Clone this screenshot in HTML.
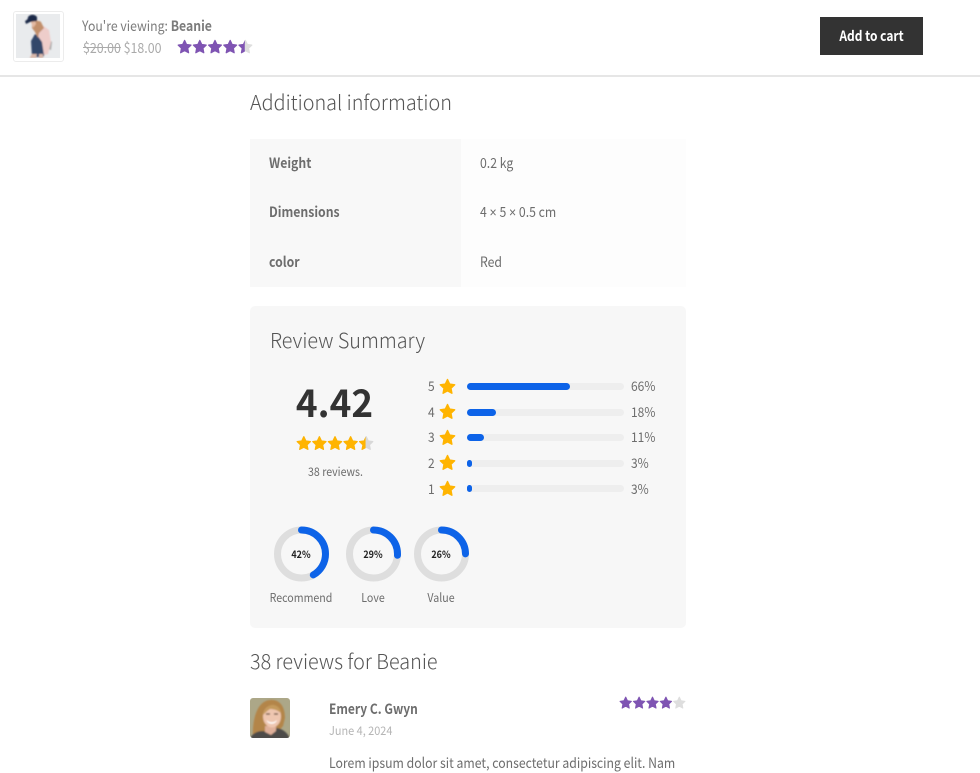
<!DOCTYPE html>
<html lang="en"><head><meta charset="utf-8"><title>Beanie</title>
<style>
html,body{margin:0;padding:0;background:#fff}
body{position:relative;width:980px;height:773px;overflow:hidden;font-family:"Noto Sans CJK JP","Liberation Sans",sans-serif;color:#6d6d6d;font-size:14px}
.t{position:absolute;white-space:nowrap;line-height:20px;transform:scaleX(.875);transform-origin:0 50%}
.c{transform-origin:50% 50%;text-align:center}
.b{font-weight:700}
.box{position:absolute}
.h{font-weight:300;color:#555;font-size:20.500px;line-height:30px;transform:scaleX(.965)}
.r{font-size:13.500px;transform:scaleX(.89)}
.track{position:absolute;left:467px;width:157px;height:7px;border-radius:4px;background:#eee}
.fill{position:absolute;left:0;top:0;height:7px;border-radius:4px;background:#0d63e8}
svg{position:absolute;display:block}
</style></head><body>
<svg width="0" height="0" style="left:0;top:0"><defs>
<path id="s" d="M12 2l3.100 6.500 7.100 1-5.200 5 1.300 7.100L12 18.200l-6.300 3.400 1.300-7.100-5.200-5 7.100-1z" stroke-width="1.800" stroke-linejoin="round"/>
<g id="row"><use href="#s" x="0"/><use href="#s" x="24"/><use href="#s" x="48"/><use href="#s" x="72"/><use href="#s" x="96"/></g>
<clipPath id="c442"><rect x="-2" y="0" width="109" height="25"/></clipPath>
<filter id="bl" x="-10%" y="-10%" width="120%" height="120%"><feGaussianBlur stdDeviation=".7"/></filter>
<clipPath id="bx"><rect width="40" height="40"/></clipPath>
</defs></svg>

<!-- sticky bar -->
<div class="box" style="left:0;top:75px;width:980px;height:2px;background:#e6e6e6"></div>
<div class="box" style="left:13px;top:11px;width:49px;height:49px;border:1px solid #ececec;border-radius:3px;background:#fff"></div>
<svg style="left:16px;top:14px" width="44" height="44" viewBox="0 0 44 44">
<rect width="44" height="44" fill="#e9ebed"/>
<g filter="url(#bl)">
<path d="M29 23l7 5-1 8-6-2z" fill="#a9a9a9"/>
<path d="M15 27l4-7 9 6 1 14-2 3H16z" fill="#33476a"/>
<path d="M19 14l7-3 7 5 2 12-3 12-4 1-2-13-7-10z" fill="#eecdca"/>
<path d="M16 9c3-2 7-3 9-1l3 6-5 5-1 5-3-6-3-4z" fill="#c2906c"/>
<path d="M15 8l4-2 1 4-3 4z" fill="#e3b9a2"/>
<path d="M9 7c2-1 3-2 3-4 2-3 7-3 9 0v4l-7 1-4 2z" fill="#1f2b48"/>
<path d="M14 43l2-3h5l-1 4h-6zM23 40h4v4h-4z" fill="#d9b8aa"/>
</g>
</svg>
<div class="t" style="left:82px;top:16px;color:#7c7c7c">You're viewing: <span class="b">Beanie</span></div>
<div class="t" style="left:83px;top:38px;color:#aaa;transform:scaleX(.886)"><span style="text-decoration:line-through">$20.00</span> $18.00</div>
<svg style="left:177px;top:39px" width="76" height="16" viewBox="0 0 120 25"><g stroke="#dedede" fill="#dedede"><use href="#row"/></g><g clip-path="url(#c442)" stroke="#7f54b3" fill="#7f54b3"><use href="#row"/></g></svg>
<div class="box" style="left:820px;top:17px;width:103px;height:38px;background:#333"></div>
<div class="t b c" style="left:820px;top:26px;width:103px;color:#fff;transform:scaleX(.855)">Add to cart</div>

<div class="t h" style="left:250px;top:85.500px">Additional information</div>

<!-- table -->
<div class="box" style="left:250px;top:139px;width:211px;height:148px;background:#f8f8f8"></div>
<div class="box" style="left:461px;top:139px;width:225px;height:148px;background:#fdfdfd"></div>
<div class="t b" style="left:269px;top:153px">Weight</div>
<div class="t" style="left:480px;top:153px">0.2 kg</div>
<div class="t b" style="left:269px;top:202px">Dimensions</div>
<div class="t" style="left:480px;top:202px">4 <span style="font-family:'Liberation Sans',sans-serif">×</span> 5 <span style="font-family:'Liberation Sans',sans-serif">×</span> 0.5 cm</div>
<div class="t b" style="left:269px;top:251.500px">color</div>
<div class="t" style="left:480px;top:251.500px">Red</div>

<!-- summary -->
<div class="box" style="left:250px;top:306px;width:436px;height:322px;background:#f7f7f7;border-radius:5px"></div>
<div class="t h" style="left:270px;top:324px">Review Summary</div>
<div class="t b c" style="left:250px;top:378px;width:169px;font-size:38px;line-height:46px;color:#333;transform:scaleX(.97)">4.42</div>
<svg style="left:296px;top:435px" width="78" height="17" viewBox="0 0 120 25"><g stroke="#d8d8d8" fill="#d8d8d8"><use href="#row"/></g><g clip-path="url(#c442)" stroke="#ffb400" fill="#ffb400"><use href="#row"/></g></svg>
<div class="t c" style="left:250.500px;top:462px;width:169px;font-size:12px;transform:scaleX(.885)">38 reviews.</div>

<div class="t r" style="left:428px;top:375px">5</div>
<svg style="left:439px;top:378px" width="17" height="17" viewBox="0 0 24 24" stroke="#ffb400" fill="#ffb400"><use href="#s"/></svg>
<div class="track" style="top:383px"><div class="fill" style="width:103px"></div></div>
<div class="t r" style="left:631px;top:375px">66%</div>

<div class="t r" style="left:428px;top:401px">4</div>
<svg style="left:439px;top:403px" width="17" height="17" viewBox="0 0 24 24" stroke="#ffb400" fill="#ffb400"><use href="#s"/></svg>
<div class="track" style="top:409px"><div class="fill" style="width:29px"></div></div>
<div class="t r" style="left:631px;top:401px">18%</div>

<div class="t r" style="left:428px;top:426px">3</div>
<svg style="left:439px;top:429px" width="17" height="17" viewBox="0 0 24 24" stroke="#ffb400" fill="#ffb400"><use href="#s"/></svg>
<div class="track" style="top:434px"><div class="fill" style="width:17px"></div></div>
<div class="t r" style="left:631px;top:426px">11%</div>

<div class="t r" style="left:428px;top:452px">2</div>
<svg style="left:439px;top:454px" width="17" height="17" viewBox="0 0 24 24" stroke="#ffb400" fill="#ffb400"><use href="#s"/></svg>
<div class="track" style="top:460px"><div class="fill" style="width:5px"></div></div>
<div class="t r" style="left:631px;top:452px">3%</div>

<div class="t r" style="left:428px;top:478px">1</div>
<svg style="left:439px;top:480px" width="17" height="17" viewBox="0 0 24 24" stroke="#ffb400" fill="#ffb400"><use href="#s"/></svg>
<div class="track" style="top:485px"><div class="fill" style="width:5px"></div></div>
<div class="t r" style="left:631px;top:478px">3%</div>

<!-- rings -->
<svg style="left:270px;top:523px" width="204" height="62" viewBox="0 0 204 62" fill="none" stroke-width="7">
<circle cx="31.500" cy="31" r="24" stroke="#dedede"/>
<circle cx="103.500" cy="31" r="24" stroke="#dedede"/>
<circle cx="171.500" cy="31" r="24" stroke="#dedede"/>
<circle cx="31.500" cy="31" r="24" stroke="#0d63e8" stroke-linecap="round" pathLength="100" stroke-dasharray="42 100" transform="rotate(-90 31.500 31)"/>
<circle cx="103.500" cy="31" r="24" stroke="#0d63e8" stroke-linecap="round" pathLength="100" stroke-dasharray="26 100" transform="rotate(-90 103.500 31)"/>
<circle cx="171.500" cy="31" r="24" stroke="#0d63e8" stroke-linecap="round" pathLength="100" stroke-dasharray="25 100" transform="rotate(-90 171.500 31)"/>
</svg>
<div class="t b c" style="left:271px;top:544px;width:60px;font-size:10px;color:#222;transform:scaleX(.9)">42%</div>
<div class="t b c" style="left:343px;top:544px;width:60px;font-size:10px;color:#222;transform:scaleX(.9)">29%</div>
<div class="t b c" style="left:411px;top:544px;width:60px;font-size:10px;color:#222;transform:scaleX(.9)">26%</div>
<div class="t c" style="left:261px;top:587.500px;width:80px;font-size:12px;transform:scaleX(.885)">Recommend</div>
<div class="t c" style="left:333px;top:587.500px;width:80px;font-size:12px;transform:scaleX(.885)">Love</div>
<div class="t c" style="left:401px;top:587.500px;width:80px;font-size:12px;transform:scaleX(.885)">Value</div>

<!-- reviews -->
<div class="t h" style="left:250px;top:644.500px">38 reviews for Beanie</div>
<svg style="left:250px;top:698px;border-radius:3px" width="40" height="40" viewBox="0 0 40 40">
<g clip-path="url(#bx)"><rect width="40" height="40" fill="#aca788"/>
<g filter="url(#bl)">
<path d="M3 40C2 24 6 3 20 2c10-1 15 7 15 18l-2 8-5 6H12z" fill="#b3854a"/>
<path d="M0 41c2-6 8-8 13-8l8 2 6-5c6 1 11 5 13 11z" fill="#4e4c49"/>
<path d="M15 28h11v5l-5 4-6-3z" fill="#dfb09a"/>
<ellipse cx="22" cy="18.500" rx="9" ry="11" fill="#eec6b0"/>
<path d="M13 17c1-6 6-11 11-10 4 1 7 4 7 8-4-3-7-4-11-4-2 1-5 4-7 6z" fill="#c49a5c"/>
<path d="M16.500 22c3 3 7.500 3 10.500 0-1 5-9.500 5-10.500 0z" fill="#fff"/>
<path d="M16 16h4M24 16h4" stroke="#5a4230" stroke-width="1.200"/>
</g></g>
</svg>
<div class="t b" style="left:329px;top:698.500px;transform:scaleX(.856)">Emery C. Gwyn</div>
<div class="t" style="left:329px;top:720.500px;font-size:12px;color:#b5b5b5;transform:scaleX(.91)">June 4, 2024</div>
<svg style="left:619px;top:696px" width="67" height="14" viewBox="0 0 120 25"><g stroke="#dedede" fill="#dedede"><use href="#row"/></g><g stroke="#7f54b3" fill="#7f54b3"><use href="#s" x="0"/><use href="#s" x="24"/><use href="#s" x="48"/><use href="#s" x="72"/></g></svg>
<div class="t" style="left:329px;top:753px">Lorem ipsum dolor sit amet, consectetur adipiscing elit. Nam</div>
</body></html>
